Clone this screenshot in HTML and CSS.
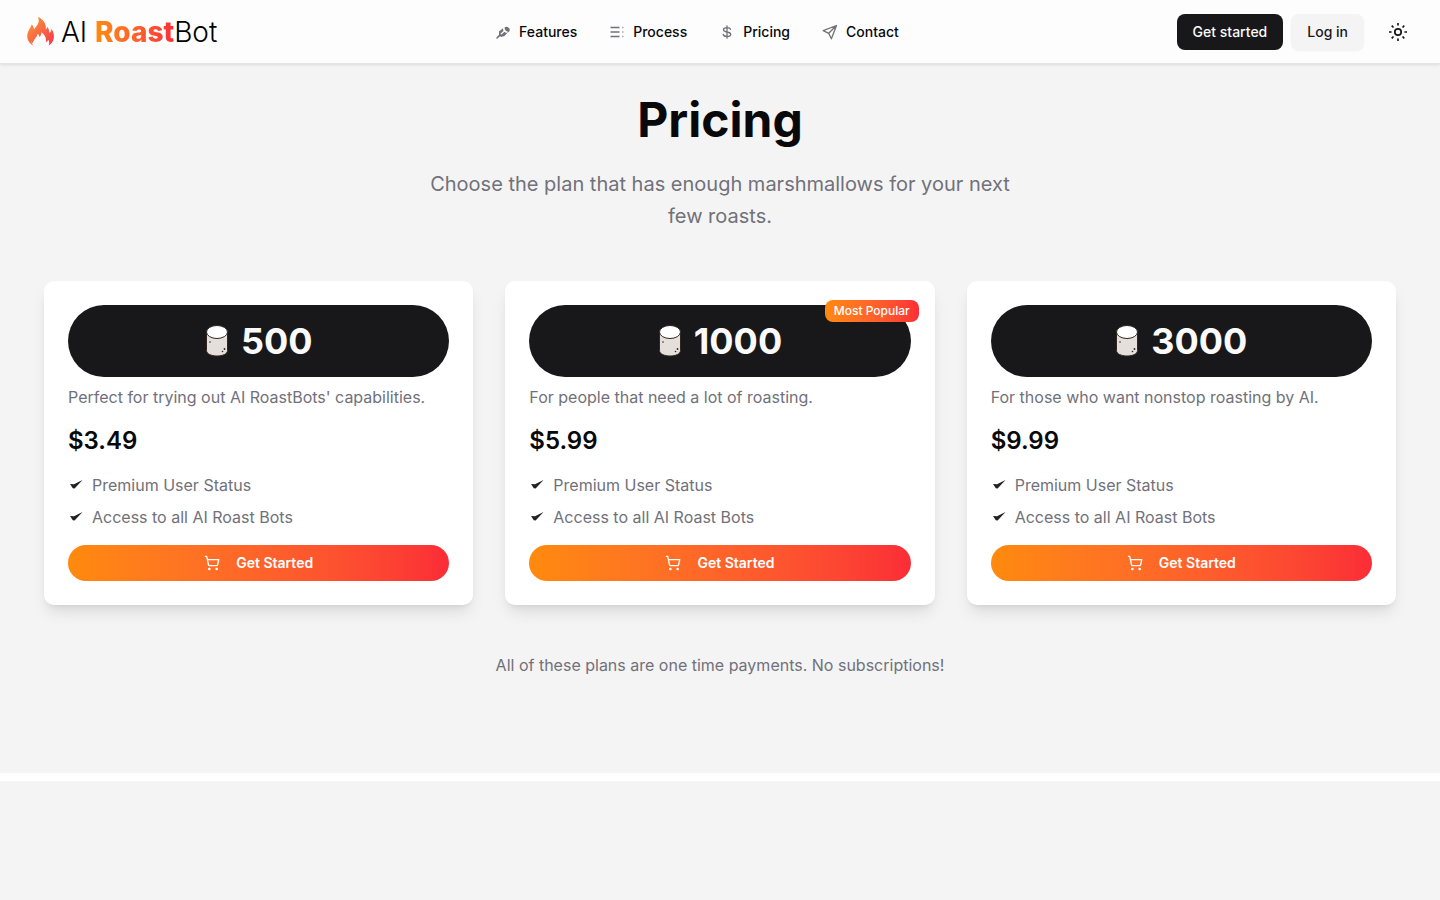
FILE: index.html
```
<!DOCTYPE html>
<html lang="en">
<head>
<meta charset="UTF-8">
<meta name="viewport" content="width=device-width, initial-scale=1.0">
<title>AI RoastBot - Pricing</title>
<link rel="stylesheet" href="styles.css">
</head>
<body>
    <!-- Shared icons -->
    <svg class="sprite" aria-hidden="true">
        <symbol id="marshmallow" viewBox="0 0 24 34">
            <path d="M1.500 8v18.500c0 3.300 4.700 5.500 10.500 5.500s10.500-2.200 10.500-5.500V8z" fill="#e4dfdb" stroke="#30251f" stroke-width="1"/>
            <ellipse cx="12" cy="8" rx="10.500" ry="6.500" fill="#ffffff" stroke="#30251f" stroke-width="1"/>
            <circle cx="5" cy="18" r="0.800" fill="#30251f"/>
            <circle cx="19.500" cy="25" r="0.900" fill="#30251f"/>
            <circle cx="17.500" cy="27.500" r="0.800" fill="#30251f"/>
        </symbol>
        <symbol id="check" viewBox="0 0 16 16">
            <path d="M2 7l4 .3L14.500 3 6.600 11.500 4.800 11.200z" fill="#222224"/>
        </symbol>
        <symbol id="cart" viewBox="0 0 24 24">
            <g fill="none" stroke="currentColor" stroke-width="2" stroke-linecap="round" stroke-linejoin="round">
                <circle cx="8" cy="21" r="1"/>
                <circle cx="19" cy="21" r="1"/>
                <path d="M2.050 2.050h2l2.660 12.420a2 2 0 0 0 2 1.580h9.780a2 2 0 0 0 1.950-1.570l1.650-7.430H5.120"/>
            </g>
        </symbol>
    </svg>

    <!-- Header -->
    <header class="header">
        <a class="logo" href="#">
            <svg class="flame" viewBox="0 0 28 30" aria-hidden="true">
                <defs>
                    <linearGradient id="fire" x1="0" y1="0" x2="1" y2="1">
                        <stop offset="0.200" stop-color="#fb8a3c"/>
                        <stop offset="0.900" stop-color="#f53f4a"/>
                    </linearGradient>
                </defs>
                <path fill="url(#fire)" d="M6.500 28.800C2.500 26.500 0 23 .3 18.500.5 14 3.500 11.500 4.600 7.500c1.600 1.400 2.300 3 2.400 5C9 9 13.500 6.500 11 0c5 2 8.500 6.500 7.800 12.500.9-.7 1.300-1.500 1.300-2.800 2 2 2.100 4.100 2.100 6 1.500-.6 2.300-2 2.200-4 2.600 3.500 3.300 8 1.800 11.600-.8 2.200-2.400 4-4.700 5.300 1-2.100 1-4-.2-5.800-.6 1.300-1.300 1.900-2.400 2.200.6-4.200-1.300-7.500-4.400-9.800-.2 2.400-.8 3.700-2 4.700-.3-1.500-.9-2.500-2-3.200-.1 3.500-4.500 6.300-4.700 9.500-.9-.4-1.500-1.100-1.800-2.100C4.500 25.500 5 27.300 6.500 28.800z"/>
            </svg>
            <span>AI <b>Roast</b>Bot</span>
        </a>

        <nav class="nav">
            <a href="#features">
                <svg viewBox="0 0 16 16" aria-hidden="true">
                    <path fill="currentColor" d="M9.500 3.500a3.200 3.200 0 0 1 5 3.600 3.200 3.200 0 0 1-2.300 1.600L10 7zM4 7.500L8.300 4l.7 3.500 3 1.800-2.500 2.700-3.500 1-1-1-2 1.800-.9-.9L4 11z"/>
                    <path fill="none" stroke="#fdfdfd" stroke-width="1.300" d="M5.500 10.500L10.500 6M8.500 3.500l.7 3.700 3.300 1"/>
                    <path fill="none" stroke="currentColor" stroke-width="1.200" d="M1.500 14.500L6 10"/>
                </svg>
                Features
            </a>
            <a href="#process">
                <svg viewBox="0 0 16 16" fill="none" stroke="currentColor" stroke-width="1.300" aria-hidden="true">
                    <path d="M1.500 3.500h9M1.500 8h9M1.500 12.500h9"/>
                    <path d="M13 3.500h1.500M13 8h1.500M13 12.500h1.500" stroke-opacity="0.600"/>
                </svg>
                Process
            </a>
            <a href="#pricing">
                <svg viewBox="0 0 16 16" fill="none" stroke="currentColor" stroke-width="1.300" stroke-linecap="round" aria-hidden="true">
                    <path d="M8 1.800v12.400M11.500 5.300C11.200 4.200 10.200 3.600 8 3.600c-2.200 0-3.500.8-3.500 2.200C4.500 7.300 6 7.700 8 8s3.700.8 3.700 2.300-1.500 2.200-3.700 2.200-3.500-.7-3.800-2"/>
                </svg>
                Pricing
            </a>
            <a href="#contact">
                <svg viewBox="0 0 16 16" fill="none" stroke="currentColor" stroke-width="1.300" stroke-linejoin="round" aria-hidden="true">
                    <path d="M14.500 1.500L1.200 6.600l5.500 2.700 2.700 5.500zM14.500 1.500L6.700 9.300"/>
                </svg>
                Contact
            </a>
        </nav>

        <div class="actions">
            <button class="btn btn-dark" type="button">Get started</button>
            <button class="btn btn-light" type="button">Log in</button>
            <button class="theme-toggle" type="button" aria-label="Toggle theme">
                <svg viewBox="0 0 20 20" fill="none" stroke="currentColor" stroke-width="1.700" aria-hidden="true">
                    <circle cx="10" cy="10" r="3.200"/>
                    <path d="M10 1v2.600M10 16.400V19M1 10h2.600M16.400 10H19M3.700 3.700l1.800 1.800M14.500 14.500l1.800 1.800M3.700 16.300l1.800-1.800M14.500 5.500l1.800-1.800"/>
                </svg>
            </button>
        </div>
    </header>

    <main>
        <!-- Pricing -->
        <section class="pricing" id="pricing">
            <h1>Pricing</h1>
            <p class="subtitle">Choose the plan that has enough marshmallows for your next few roasts.</p>

            <div class="plans">
                <article class="card">
                    <h2 class="amount"><svg aria-hidden="true"><use href="#marshmallow"/></svg>500</h2>
                    <p class="description">Perfect for trying out AI RoastBots' capabilities.</p>
                    <p class="price">$3.49</p>
                    <ul class="perks">
                        <li><svg aria-hidden="true"><use href="#check"/></svg>Premium User Status</li>
                        <li><svg aria-hidden="true"><use href="#check"/></svg>Access to all AI Roast Bots</li>
                    </ul>
                    <button class="buy" type="button"><svg aria-hidden="true"><use href="#cart"/></svg>Get Started</button>
                </article>

                <article class="card">
                    <span class="badge">Most Popular</span>
                    <h2 class="amount"><svg aria-hidden="true"><use href="#marshmallow"/></svg>1000</h2>
                    <p class="description">For people that need a lot of roasting.</p>
                    <p class="price">$5.99</p>
                    <ul class="perks">
                        <li><svg aria-hidden="true"><use href="#check"/></svg>Premium User Status</li>
                        <li><svg aria-hidden="true"><use href="#check"/></svg>Access to all AI Roast Bots</li>
                    </ul>
                    <button class="buy" type="button"><svg aria-hidden="true"><use href="#cart"/></svg>Get Started</button>
                </article>

                <article class="card">
                    <h2 class="amount"><svg aria-hidden="true"><use href="#marshmallow"/></svg>3000</h2>
                    <p class="description">For those who want nonstop roasting by AI.</p>
                    <p class="price">$9.99</p>
                    <ul class="perks">
                        <li><svg aria-hidden="true"><use href="#check"/></svg>Premium User Status</li>
                        <li><svg aria-hidden="true"><use href="#check"/></svg>Access to all AI Roast Bots</li>
                    </ul>
                    <button class="buy" type="button"><svg aria-hidden="true"><use href="#cart"/></svg>Get Started</button>
                </article>
            </div>

            <p class="note">All of these plans are one time payments. No subscriptions!</p>
        </section>

        <!-- Contact -->
        <section class="contact" id="contact"></section>
    </main>
</body>
</html>
```

FILE: styles.css
```
/* General Styles */
* {
    margin: 0;
    padding: 0;
    box-sizing: border-box;
}

body {
    display: flex;
    flex-direction: column;
    min-height: 100vh;
    font-family: Inter, sans-serif;
    font-size: 16px;
    line-height: 24px;
    background: #ffffff;
    color: #09090b;
}

a {
    color: inherit;
    text-decoration: none;
}

button {
    border: none;
    font-family: inherit;
    cursor: pointer;
}

.sprite {
    display: none;
}

/* Header */
.header {
    position: relative;
    display: flex;
    align-items: center;
    justify-content: space-between;
    height: 64px;
    padding: 0 24px;
    background: #fdfdfd;
    border-bottom: 1px solid #e4e4e7;
    box-shadow: 0 1px 3px rgba(0, 0, 0, 0.1);
}

.logo {
    display: flex;
    align-items: center;
    gap: 6px;
    padding-left: 3px;
    font-size: 28px;
    line-height: 36px;
    font-weight: 300;
    color: #000000;
}

.logo b {
    font-weight: 800;
    background: linear-gradient(to right in oklab, #ff8a0c, #fb2c36);
    -webkit-background-clip: text;
    background-clip: text;
    color: transparent;
}

.flame {
    width: 28px;
    height: 30px;
}

.nav {
    display: flex;
    gap: 32px;
    font-size: 14px;
    line-height: 20px;
    font-weight: 500;
}

.nav a {
    display: flex;
    align-items: center;
    gap: 8px;
}

.nav svg {
    width: 16px;
    height: 16px;
    color: #71717a;
}

.actions {
    display: flex;
    align-items: center;
    gap: 8px;
}

.btn {
    height: 36px;
    padding: 0 16px;
    border-radius: 8px;
    font-size: 14px;
    line-height: 20px;
    font-weight: 500;
}

.btn-dark {
    background: #18181b;
    color: #fafafa;
}

.btn-light {
    background: #f4f4f5;
    color: #18181b;
    box-shadow: 0 1px 2px rgba(0, 0, 0, 0.05);
}

.theme-toggle {
    display: flex;
    align-items: center;
    justify-content: center;
    width: 36px;
    height: 36px;
    margin-left: 8px;
    background: transparent;
    color: #18181b;
}

.theme-toggle svg {
    width: 20px;
    height: 20px;
}

/* Pricing */
main {
    display: flex;
    flex: 1;
    flex-direction: column;
    gap: 8px;
}

.pricing {
    padding: 32px 44px 96px;
    background: #f4f4f4;
    text-align: center;
}

.pricing h1 {
    font-size: 48px;
    line-height: 48px;
    font-weight: 700;
}

.subtitle {
    max-width: 600px;
    margin: 24px auto 49px;
    font-size: 20px;
    line-height: 32px;
    color: #71717a;
}

.plans {
    display: grid;
    grid-template-columns: repeat(3, 1fr);
    gap: 32px;
    max-width: 1352px;
    margin: 0 auto;
    text-align: left;
}

.card {
    position: relative;
    padding: 24px;
    background: #ffffff;
    border-radius: 10px;
    box-shadow: 0 10px 15px -3px rgba(0, 0, 0, 0.1), 0 4px 6px -4px rgba(0, 0, 0, 0.1);
}

.badge {
    position: absolute;
    top: 19px;
    right: 16px;
    padding: 3px 9px;
    border-radius: 8px;
    background: linear-gradient(to right in oklab, #ff8a0c, #fb2c36);
    color: #ffffff;
    font-size: 12px;
    line-height: 16px;
    font-weight: 500;
}

.amount {
    display: flex;
    align-items: center;
    justify-content: center;
    gap: 12px;
    height: 72px;
    border-radius: 36px;
    background: #18181b;
    color: #fafafa;
    font-size: 36px;
    line-height: 40px;
    font-weight: 700;
}

.amount svg {
    width: 24px;
    height: 34px;
}

.description {
    margin-top: 8px;
    color: #71717a;
}

.price {
    margin: 16px 0;
    font-size: 24px;
    line-height: 32px;
    font-weight: 600;
}

.perks {
    display: flex;
    flex-direction: column;
    gap: 8px;
    list-style: none;
    color: #71717a;
}

.perks li {
    display: flex;
    align-items: center;
    gap: 8px;
}

.perks svg {
    width: 16px;
    height: 16px;
}

.buy {
    display: flex;
    align-items: center;
    justify-content: center;
    gap: 16px;
    width: 100%;
    height: 36px;
    margin-top: 16px;
    border-radius: 18px;
    background: linear-gradient(to right in oklab, #ff8a0c, #fb2c36);
    color: #ffffff;
    font-size: 14px;
    line-height: 20px;
    font-weight: 600;
}

.buy svg {
    width: 16px;
    height: 16px;
}

.note {
    margin-top: 48px;
    color: #71717a;
}

/* Contact */
.contact {
    flex: 1;
    background: #f4f4f4;
}
```
